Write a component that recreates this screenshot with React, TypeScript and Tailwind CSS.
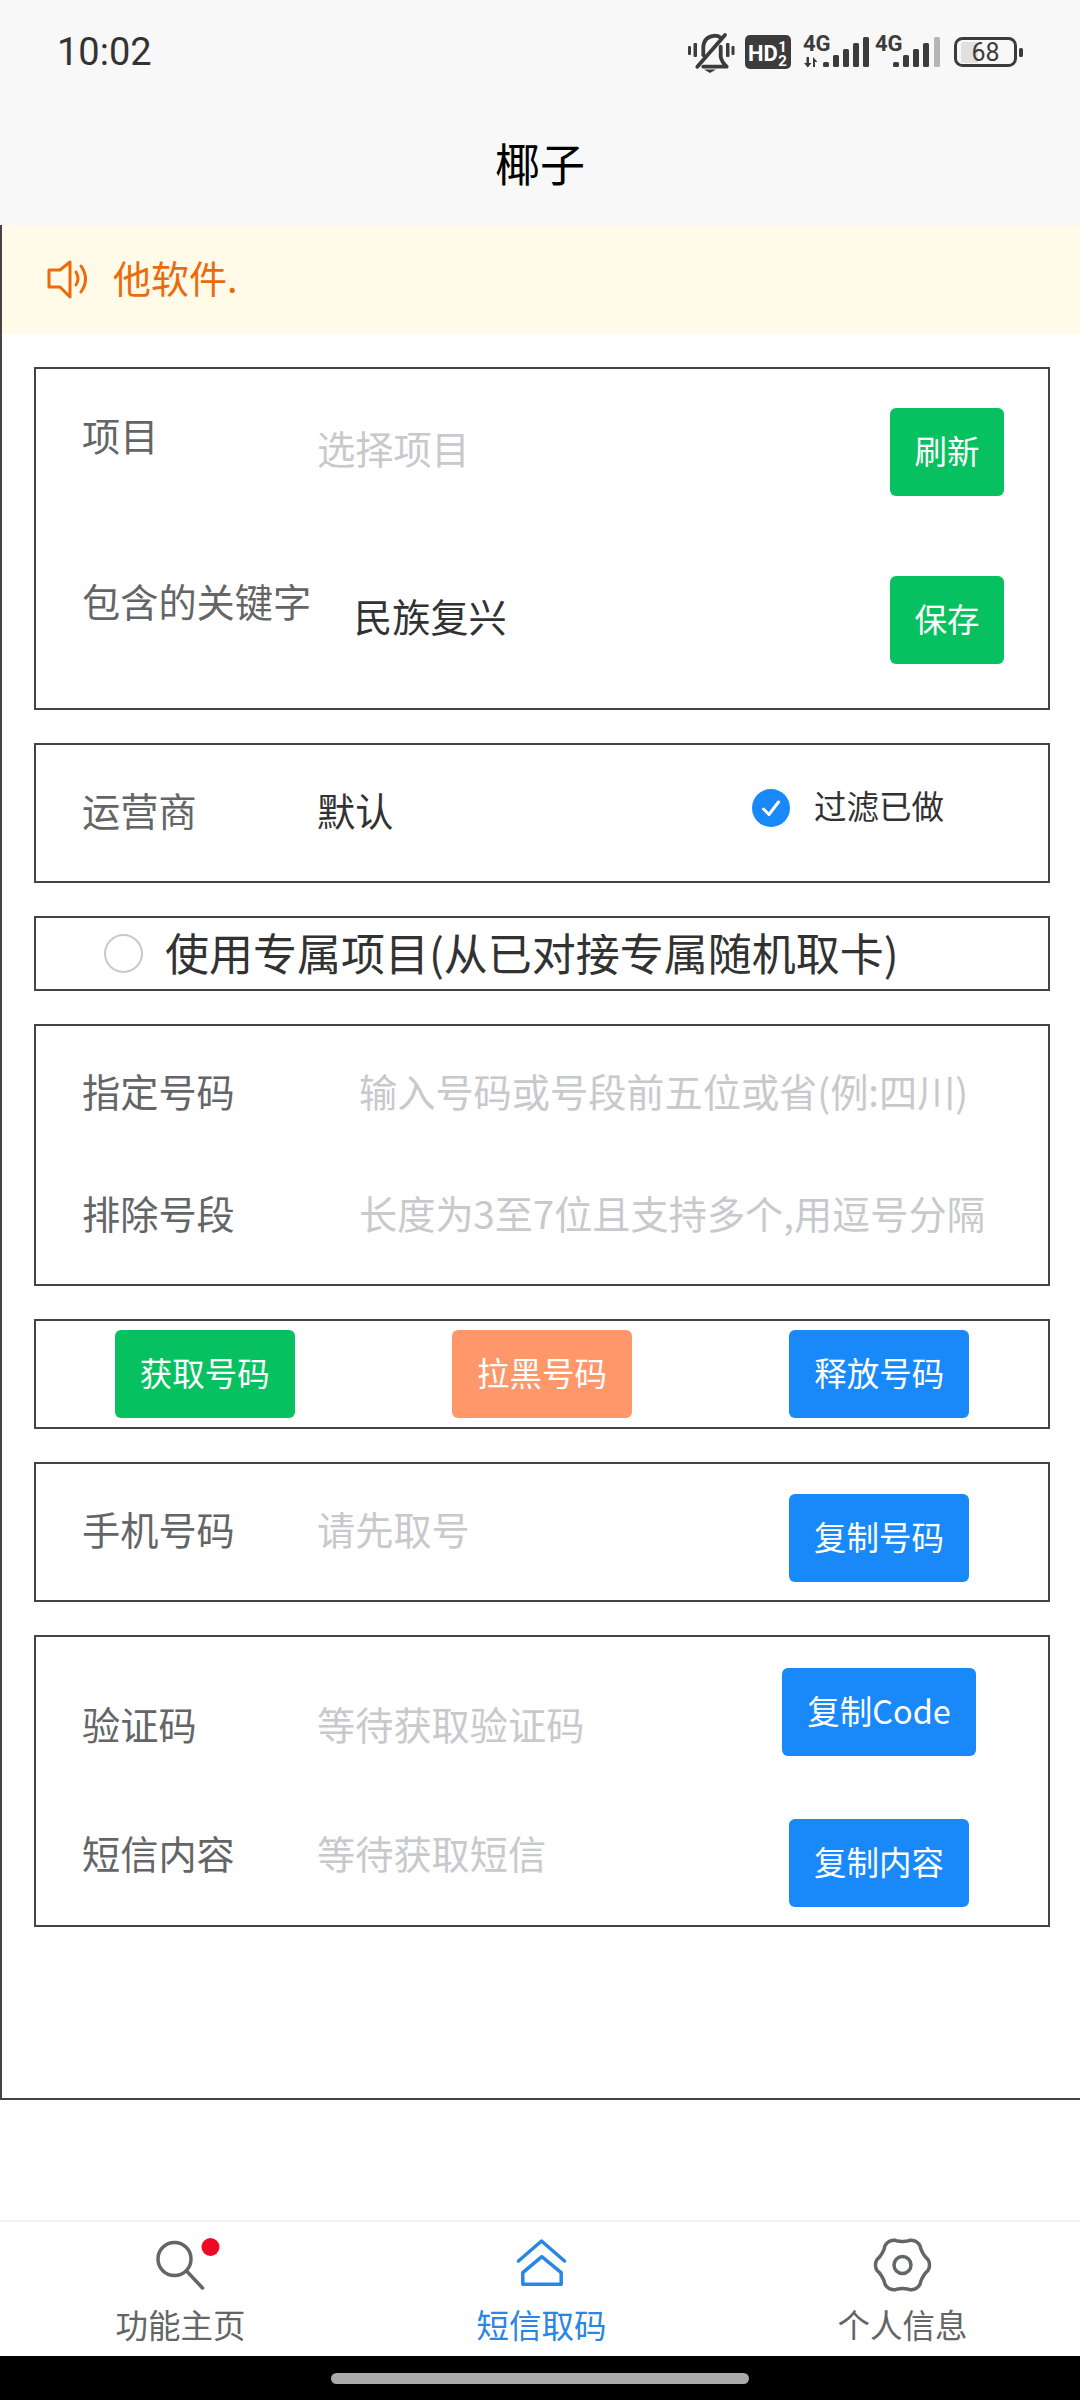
import React from "react";

const Btn = ({ children, color, w = "w-[180px]" }: { children: React.ReactNode; color: string; w?: string }) => (
  <div className={`${w} ${color} h-[88px] shrink-0 rounded-[6px] flex items-center justify-center pb-[3px] text-white text-[32.5px] leading-none`}>
    {children}
  </div>
);

const Label = ({ children, className = "" }: { children: React.ReactNode; className?: string }) => (
  <div className={`text-[#646566] text-[38.2px] leading-[50px] whitespace-nowrap ${className}`}>{children}</div>
);

const Placeholder = ({ children, className = "" }: { children: React.ReactNode; className?: string }) => (
  <div className={`text-[#c8c9cc] text-[38.2px] leading-[50px] whitespace-nowrap ${className}`}>{children}</div>
);

const Value = ({ children, className = "" }: { children: React.ReactNode; className?: string }) => (
  <div className={`text-[#323233] text-[38.2px] leading-[50px] whitespace-nowrap ${className}`}>{children}</div>
);

const Card = ({ children, className = "" }: { children: React.ReactNode; className?: string }) => (
  <div className={`w-[1016px] border-2 border-[#444444] ${className}`}>{children}</div>
);

const ink = "#3c3c3c";
const tops = [34, 27, 21, 15, 9];

const StatusIcons = () => (
  <svg width="340" height="50" viewBox="0 0 340 50" fill="none">
    <path d="M18.3 27V18.7Q19 8.7 30 7.7Q33.3 7.7 35.7 9.7M35.700 18.7V28.7Q36.7 34.3 41.7 38.7H18.3M12.3 38.7L40 7" stroke={ink} strokeWidth="3.8" strokeLinecap="round" strokeLinejoin="round" />
    <path d="M19 41.500H31L25 45Z" fill={ink} />
    <rect x="3" y="18" width="3" height="9" rx="1" fill={ink} />
    <rect x="8.500" y="15" width="3.500" height="14" rx="1" fill={ink} />
    <rect x="41" y="15" width="3.500" height="14" rx="1" fill={ink} />
    <rect x="46.500" y="18" width="3" height="9" rx="1" fill={ink} />
    <rect x="60" y="7" width="46" height="34" rx="5" fill={ink} />
    <text x="63" y="33" fontFamily="Roboto" fontWeight="700" fontSize="22" fill="#fff">HD</text>
    <text x="97.500" y="24" textAnchor="middle" fontFamily="Roboto" fontWeight="700" fontSize="15" fill="#fff">1</text>
    <text x="97.500" y="38" textAnchor="middle" fontFamily="Roboto" fontWeight="700" fontSize="15" fill="#fff">2</text>
    <text x="118" y="23" fontFamily="Roboto" fontWeight="700" fontSize="22" fill={ink}>4G</text>
    <path d="M121.500 29h2.500v6h2.500l-3.700 4.500l-3.800-4.500h2.500zM128 39v-10l4.500 5h-2.500v5z" fill={ink} />
    {[138, 148, 158, 168, 178].map((x, i) => (
      <rect key={x} x={x} y={tops[i]} width="6" height={39 - tops[i]} rx="1.500" fill={ink} />
    ))}
    <text x="190" y="23" fontFamily="Roboto" fontWeight="700" fontSize="22" fill={ink}>4G</text>
    {[208, 218, 228, 238, 249].map((x, i) => (
      <rect key={x} x={x} y={tops[i]} width="6" height={39 - tops[i]} rx="1.500" fill={i === 4 ? "#b5b5b5" : ink} />
    ))}
    <rect x="276" y="14" width="17" height="21" rx="2" fill="#e0e0e0" />
    <rect x="270.500" y="10.500" width="60" height="27" rx="7" stroke={ink} strokeWidth="3" />
    <text x="300.500" y="33" textAnchor="middle" fontFamily="Roboto" fontSize="25" fill={ink}>68</text>
    <rect x="334" y="20" width="4" height="9" rx="1.500" fill={ink} />
  </svg>
);

const gearPath = (() => {
  const pts: string[] = [];
  for (let i = 0; i < 144; i++) {
    const t = (i / 144) * Math.PI * 2;
    const c = Math.cos(6 * t);
    const r = 25.3 + 1.7 * Math.sign(c) * Math.pow(Math.abs(c), 0.7);
    pts.push(`${(50.5 + r * Math.cos(t)).toFixed(2)} ${(30 + r * Math.sin(t)).toFixed(2)}`);
  }
  return `M${pts.join("L")}Z`;
})();

const Tab = ({ icon, label, active }: { icon: React.ReactNode; label: string; active?: boolean }) => (
  <div className="flex flex-col items-center pt-[13px]">
    <svg width="101" height="60" viewBox="0 0 101 60" fill="none" className="block">
      {icon}
    </svg>
    <div className={`mt-[9px] text-[32.5px] leading-[40px] ${active ? "text-[#2a85e5]" : "text-[#646566]"}`}>{label}</div>
  </div>
);

export default function App() {
  return (
    <div className="w-[1080px] h-[2400px] overflow-hidden flex flex-col bg-white font-['Noto_Sans_CJK_SC',sans-serif]">
      <header className="h-[225px] shrink-0 bg-[#f8f8f8]">
        <div className="h-[104px] flex items-start justify-between">
          <div className="ml-[57px] mt-[28px] font-['Roboto',sans-serif] text-[38px] leading-[48px] text-[#333333]">10:02</div>
          <div className="mt-[28px] mr-[55px]">
            <StatusIcons />
          </div>
        </div>
        <div className="h-[116px] flex items-center justify-center text-[45px] leading-none text-black">椰子</div>
      </header>

      <main className="h-[1875px] shrink-0 border-l-2 border-b-2 border-[#444444]">
        <div className="h-[109px] bg-[#fffbe8] flex items-center pl-[44px] text-[#ed6a0c] text-[38px] leading-none">
          <svg width="50" height="44" viewBox="0 0 50 44" fill="none" stroke="#ed6a0c" strokeWidth="3" strokeLinejoin="round" strokeLinecap="round">
            <path d="M3 12H14L24 4V39L14 29H3Z" />
            <path d="M30 14Q34 21 30 27" />
            <path d="M35 8Q44 21 35 34" />
          </svg>
          <span className="ml-[17px] pb-[5px]">他软件.</span>
        </div>

        <div className="flex flex-col gap-[33px] pt-[33px] pl-[32px]">
          <Card className="h-[343px] pt-[39px] pl-[46px] pr-[44px] flex flex-col gap-[80px]">
            <div className="flex items-start">
              <Label className="w-[235px] mt-[2px]">项目</Label>
              <Placeholder className="flex-1 mt-[15px]">选择项目</Placeholder>
              <Btn color="bg-[#07c160]" w="w-[114px]">刷新</Btn>
            </div>
            <div className="flex items-start">
              <Label className="w-[235px]">包含的关键字</Label>
              <Value className="flex-1 mt-[15px] pl-[37px]">民族复兴</Value>
              <Btn color="bg-[#07c160]" w="w-[114px]">保存</Btn>
            </div>
          </Card>

          <Card className="h-[140px] pl-[46px] flex items-center">
            <Label className="w-[235px] mb-[6px]">运营商</Label>
            <Value className="w-[435px] mb-[6px]">默认</Value>
            <div className="flex items-center mb-[11px]">
              <div className="w-[38px] h-[38px] rounded-full bg-[#1989fa] flex items-center justify-center">
                <svg width="24" height="24" viewBox="0 0 24 24" fill="none" stroke="#fff" strokeWidth="3" strokeLinecap="round" strokeLinejoin="round">
                  <path d="M4.500 13L10 18.500L19.500 6" />
                </svg>
              </div>
              <span className="ml-[24px] pb-[4px] text-[32.5px] leading-none text-[#323233]">过滤已做</span>
            </div>
          </Card>

          <Card className="h-[75px] pl-[68px] flex items-center">
            <div className="w-[39px] h-[39px] rounded-full border-2 border-[#c8c9cc]" />
            <span className="ml-[22px] pb-[4px] text-[44px] leading-none text-[#323233] whitespace-nowrap">使用专属项目(从已对接专属随机取卡)</span>
          </Card>

          <Card className="h-[262px] pl-[46px] flex flex-col justify-center">
            <div className="h-[122px] flex items-center">
              <Label className="w-[277px] mb-[6px]">指定号码</Label>
              <Placeholder className="mb-[6px]">输入号码或号段前五位或省(例:四川)</Placeholder>
            </div>
            <div className="h-[122px] flex items-center">
              <Label className="w-[277px] mb-[6px]">排除号段</Label>
              <Placeholder className="mb-[6px]">长度为3至7位且支持多个,用逗号分隔</Placeholder>
            </div>
          </Card>

          <Card className="h-[110px] flex items-center justify-around">
            <Btn color="bg-[#07c160]">获取号码</Btn>
            <Btn color="bg-[#ff976a]">拉黑号码</Btn>
            <Btn color="bg-[#1989fa]">释放号码</Btn>
          </Card>

          <Card className="h-[140px] pl-[46px] pr-[79px] flex items-center">
            <Label className="w-[235px] mb-[6px]">手机号码</Label>
            <Placeholder className="flex-1 mb-[6px]">请先取号</Placeholder>
            <div className="mt-[11px]">
              <Btn color="bg-[#1989fa]">复制号码</Btn>
            </div>
          </Card>

          <Card className="h-[292px] pt-[31px] pl-[46px] pr-[72px] flex flex-col gap-[63px]">
            <div className="flex items-start">
              <Label className="w-[235px] mt-[31px]">验证码</Label>
              <Placeholder className="flex-1 mt-[31px]">等待获取验证码</Placeholder>
              <Btn color="bg-[#1989fa]" w="w-[194px]">复制Code</Btn>
            </div>
            <div className="flex items-start">
              <Label className="w-[235px] mt-[9px]">短信内容</Label>
              <Placeholder className="flex-1 mt-[9px]">等待获取短信</Placeholder>
              <div className="w-[194px] flex justify-center">
                <Btn color="bg-[#1989fa]">复制内容</Btn>
              </div>
            </div>
          </Card>
        </div>
      </main>

      <div className="h-[120px] shrink-0" />

      <nav className="h-[136px] w-[1083px] shrink-0 border-t-2 border-[#f2f2f2] grid grid-cols-3">
        <Tab
          label="功能主页"
          icon={
            <>
              <circle cx="44.500" cy="24" r="16.500" stroke="#646566" strokeWidth="3.500" />
              <path d="M57.500 37L72.500 53" stroke="#646566" strokeWidth="3.500" strokeLinecap="round" />
              <circle cx="80.500" cy="12" r="9" fill="#ee0a24" />
            </>
          }
        />
        <Tab
          active
          label="短信取码"
          icon={
            <g stroke="#2a85e5" strokeWidth="3.500" strokeLinecap="round" strokeLinejoin="round">
              <path d="M27.500 26L50.500 6L73.500 26" />
              <path d="M50.800 21.700L70.200 37.700V49.300H31.800V37.700Z" />
            </g>
          }
        />
        <Tab
          label="个人信息"
          icon={
            <g stroke="#646566" strokeWidth="3.500" strokeLinejoin="round">
              <path d={gearPath} />
              <circle cx="50.500" cy="30" r="8.500" />
            </g>
          }
        />
      </nav>

      <div className="h-[44px] shrink-0 bg-black flex justify-center pt-[17px]">
        <div className="w-[418px] h-[11px] rounded-full bg-[#aaaaaa]" />
      </div>
    </div>
  );
}
